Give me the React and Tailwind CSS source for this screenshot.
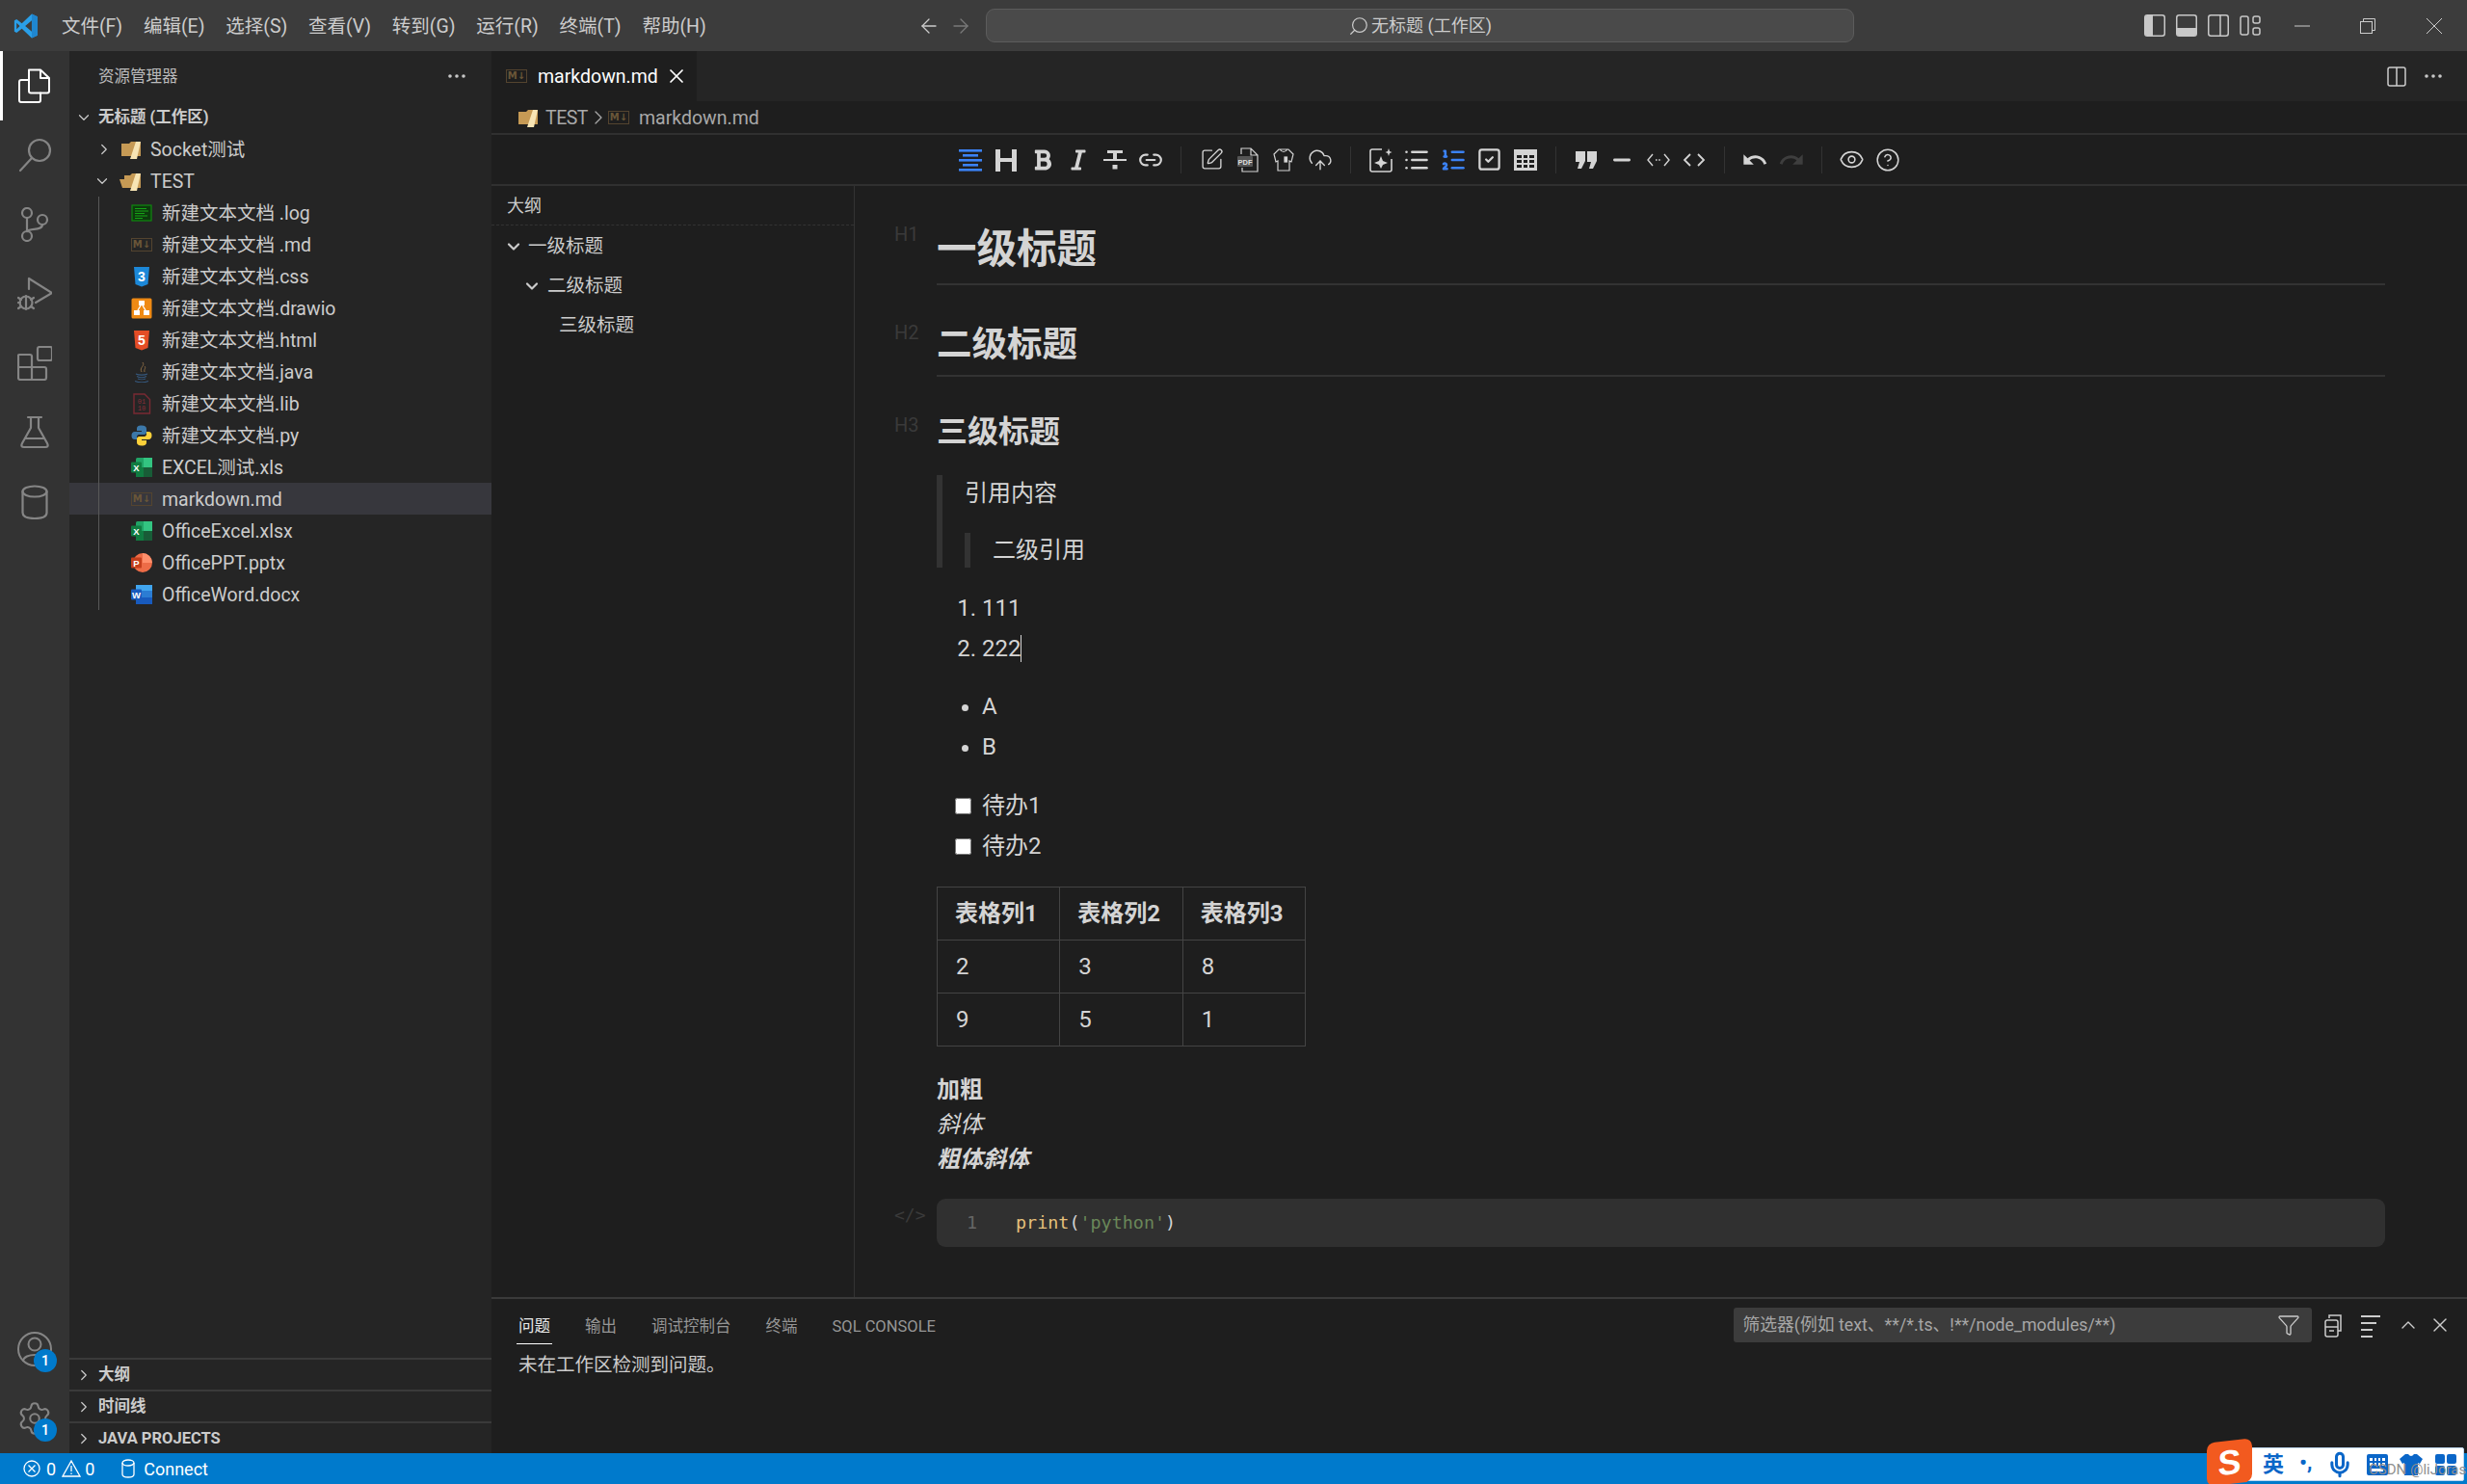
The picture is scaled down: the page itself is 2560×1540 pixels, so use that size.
import React from "react";
import {
  ArrowLeft, ArrowRight, ChevronDown, ChevronRight, ChevronUp, CircleHelp, CloudUpload, Ellipsis, Eye, Funnel,
  Link2, List, ListOrdered, Mic, Minus, Search, Settings, SquareCheck, SquarePen, X,
} from "lucide-react";
import { FaBold, FaItalic } from "react-icons/fa";
import { MdUndo, MdRedo } from "react-icons/md";

const S = ({ size = 36, vb = 36, className = "", children, stroke = "currentColor", sw = 2 }) => (
  <svg width={size} height={size} viewBox={`0 0 ${vb} ${vb}`} fill="none" stroke={stroke} strokeWidth={sw} className={className} strokeLinejoin="round" strokeLinecap="round">
    {children}
  </svg>
);

const Logo = () => (
  <svg width="26" height="26" viewBox="0 0 24 24" className="shrink-0">
    <path d="M17.5 0.5 L23 3 V21 L17.5 23.5 L8 14.5 L3 18.5 L0.8 17.3 V6.7 L3 5.5 L8 9.5 Z M17.5 6.8 L11.2 12 L17.5 17.2 Z M3 9 V15 L6 12 Z" fill="#2a9fe8" fillRule="evenodd" />
    <path d="M17.5 0.5 L23 3 V21 L17.5 23.5 V17.2 V6.8 Z" fill="#1f86cf" />
  </svg>
);

const Md = () => (
  <span className="w-[22px] h-[14px] shrink-0 border border-[#54442f] flex items-center justify-center text-[10px] leading-none font-bold text-[#6a5638] font-['DejaVu_Sans',sans-serif]">M↓</span>
);

const Folder = ({ open }) => (
  <svg width="24" height="22" viewBox="0 0 24 22" className="shrink-0">
    <path d={open ? "M6 5 L12 5 L14 3 H23 V18 H4 L1 9 H6 Z" : "M3 5 H11 L13 3 H23 V18 H3 Z"} fill="#c69a55" />
    <path d="M18 3 H23 L19 21 H12 Z" fill="#f7e4b4" />
  </svg>
);

const FileIcon = ({ t }) => {
  if (t === "md") return <Md />;
  const common = { width: 22, height: 22, viewBox: "0 0 22 22", className: "shrink-0" };
  if (t === "log") return <svg {...common}><rect x="1" y="3" width="20" height="16" fill="#0c3a0c" stroke="#0f8a0f" strokeWidth="1.2" /><path d="M4 6.5h12M4 9h14M4 11.5h10M4 14h13M4 16.5h8" stroke="#16a316" strokeWidth="1" /></svg>;
  if (t === "css") return <svg {...common}><path d="M3 1 H19 L17.5 19 L11 21.5 L4.5 19 Z" fill="#1c88d8" /><text x="11" y="16" textAnchor="middle" fontSize="14" fontWeight="700" fill="#fff" fontFamily="Liberation Sans">3</text></svg>;
  if (t === "html") return <svg {...common}><path d="M3 1 H19 L17.5 19 L11 21.5 L4.5 19 Z" fill="#e44d26" /><text x="11" y="16" textAnchor="middle" fontSize="14" fontWeight="700" fill="#fff" fontFamily="Liberation Sans">5</text></svg>;
  if (t === "drawio") return <svg {...common}><rect x="0.5" y="0.5" width="21" height="21" rx="1.5" fill="#ef8a14" /><rect x="8" y="3" width="6" height="5" fill="#fff" /><rect x="3" y="13" width="6" height="5" fill="#fff" /><rect x="13" y="13" width="6" height="5" fill="#fff" /><path d="M10 8 L7 13 M12 8 L15 13" stroke="#fff" strokeWidth="1.4" /></svg>;
  if (t === "java") return <svg {...common} fill="none"><path d="M12 1 C15 5 8 6 11 11 M14 5 C16 7 13 8 14 11" stroke="#8a6b45" strokeWidth="1" /><path d="M5 13 C8 14.5 14 14.5 17 13 M6 15.5 C9 17 13 17 16 15.5 M7 18 C9 19 13 19 15 18 M4 20.5 C8 22 14 22 18 20.5" stroke="#35587e" strokeWidth="1.2" /></svg>;
  if (t === "lib") return <svg {...common}><path d="M3 1 H14 L19.5 6.5 V21 H3 Z" fill="none" stroke="#7a2a33" strokeWidth="1.4" /><text x="11" y="11" textAnchor="middle" fontSize="7" fill="#8b2f3a" fontFamily="Liberation Mono">01</text><text x="11" y="18" textAnchor="middle" fontSize="7" fill="#8b2f3a" fontFamily="Liberation Mono">10</text></svg>;
  if (t === "py") return <svg {...common}><path d="M11 0.5 C7 0.5 6 2 6 4 V6 H11 V7 H4 C1.5 7 0.5 9 0.5 11 C0.5 13.5 1.5 15 4 15 H6 V12.5 C6 10.5 7.5 10 9 10 H13.5 C15 10 16 9 16 7.5 V4 C16 2 14.5 0.5 11 0.5 Z" fill="#3c78a9" /><path d="M11 21.5 C15 21.5 16 20 16 18 V16 H11 V15 H18 C20.5 15 21.5 13 21.5 11 C21.5 8.5 20.5 7 18 7 H16 V9.5 C16 11.5 14.5 12 13 12 H8.5 C7 12 6 13 6 14.5 V18 C6 20 7.5 21.5 11 21.5 Z" fill="#fdd13a" /></svg>;
  if (t === "xls") return <svg {...common}><rect x="5" y="1" width="17" height="20" rx="1.5" fill="#21a366" /><rect x="13" y="1" width="9" height="10" fill="#33c481" /><rect x="5" y="11" width="8" height="10" fill="#107c41" /><rect x="13" y="11" width="9" height="10" fill="#185c37" /><rect x="0" y="5.5" width="11" height="11" rx="1" fill="#107c41" /><text x="5.5" y="14.5" textAnchor="middle" fontSize="9.5" fontWeight="700" fill="#fff" fontFamily="Liberation Sans">X</text></svg>;
  if (t === "ppt") return <svg {...common}><circle cx="12" cy="11" r="10" fill="#ed6c47" /><path d="M12 1 A10 10 0 0 1 22 11 H12 Z" fill="#ff8f6b" /><rect x="0" y="5.5" width="11" height="11" rx="1" fill="#c43e1c" /><text x="5.5" y="14.5" textAnchor="middle" fontSize="9.5" fontWeight="700" fill="#fff" fontFamily="Liberation Sans">P</text></svg>;
  if (t === "doc") return <svg {...common}><rect x="5" y="1" width="17" height="20" rx="1.5" fill="#2b7cd3" /><rect x="5" y="1" width="17" height="6" fill="#41a5ee" /><rect x="5" y="14" width="17" height="7" fill="#185abd" /><rect x="0" y="5.5" width="11" height="11" rx="1" fill="#185abd" /><text x="5.5" y="14.5" textAnchor="middle" fontSize="9.5" fontWeight="700" fill="#fff" fontFamily="Liberation Sans">W</text></svg>;
  return null;
};

const menus = ["文件(F)", "编辑(E)", "选择(S)", "查看(V)", "转到(G)", "运行(R)", "终端(T)", "帮助(H)"];
const files = [
  ["log", "新建文本文档 .log"], ["md", "新建文本文档 .md"], ["css", "新建文本文档.css"], ["drawio", "新建文本文档.drawio"],
  ["html", "新建文本文档.html"], ["java", "新建文本文档.java"], ["lib", "新建文本文档.lib"], ["py", "新建文本文档.py"],
  ["xls", "EXCEL测试.xls"], ["md", "markdown.md"], ["xls", "OfficeExcel.xlsx"], ["ppt", "OfficePPT.pptx"], ["doc", "OfficeWord.docx"],
];

const TitleBar = () => (
  <div className="h-[53px] shrink-0 bg-[#3c3c3c] flex items-center text-[#cccccc] text-[19.5px]">
    <div className="w-[950px] shrink-0 flex items-center">
      <div className="w-[53px] pl-[14px] flex shrink-0"><Logo /></div>
      {menus.map((m) => (
        <span key={m} className="px-[10.9px] leading-[53px] whitespace-nowrap translate-y-px">{m}</span>
      ))}
    </div>
    <div className="w-[73px] shrink-0 flex items-center pl-[2px] gap-[9px]">
      <ArrowLeft size={24} strokeWidth={1.3} className="text-[#cccccc]" />
      <ArrowRight size={24} strokeWidth={1.3} className="text-[#7a7a7a]" />
    </div>
    <div className="w-[901px] h-[35px] shrink-0 bg-[#4a4a4a] border border-[#5c5c5c] rounded-[9px] flex items-center justify-center gap-[2px] text-[18px] text-[#cccccc]">
      <Search size={22} strokeWidth={1.3} className="-scale-x-100" />
      <span>无标题 (工作区)</span>
    </div>
    <div className="ml-auto flex items-center text-[#c8c8c8]">
      <div className="w-[33px] flex justify-center"><svg width="22" height="23" viewBox="0 0 22 23"><rect x="0.75" y="0.75" width="20.5" height="21.5" rx="2.5" fill="none" stroke="currentColor" strokeWidth="1.5" /><path d="M1 3 Q1 1 3 1 H9 V22 H3 Q1 22 1 20 Z" fill="currentColor" /></svg></div>
      <div className="w-[33px] flex justify-center"><svg width="22" height="23" viewBox="0 0 22 23"><rect x="0.75" y="0.75" width="20.5" height="21.5" rx="2.5" fill="none" stroke="currentColor" strokeWidth="1.5" /><path d="M1 14 H21 V20 Q21 22 19 22 H3 Q1 22 1 20 Z" fill="currentColor" /></svg></div>
      <div className="w-[33px] flex justify-center"><svg width="22" height="23" viewBox="0 0 22 23" fill="none" stroke="currentColor" strokeWidth="1.5"><rect x="0.75" y="0.75" width="20.5" height="21.5" rx="2.5" /><path d="M13 1 V22" /></svg></div>
      <div className="w-[33px] flex justify-center"><svg width="22" height="23" viewBox="0 0 22 23" fill="none" stroke="currentColor" strokeWidth="1.5"><rect x="1" y="2" width="8" height="19" rx="2" /><rect x="14" y="2" width="7" height="7" rx="2" /><rect x="14" y="14" width="7" height="7" rx="2" /></svg></div>
    </div>
    <div className="ml-[3.5px] flex items-center text-[#cccccc]">
      <div className="w-[68px] flex justify-center"><svg width="16" height="2" viewBox="0 0 16 2"><path d="M0 1 H16" stroke="currentColor" strokeWidth="1" /></svg></div>
      <div className="w-[68px] flex justify-center"><svg width="16" height="16" viewBox="0 0 16 16" fill="none" stroke="currentColor" strokeWidth="1"><rect x="0.5" y="3.5" width="12" height="12" /><path d="M3.5 3 V0.5 H15.5 V12.5 H13" /></svg></div>
      <div className="w-[69px] flex justify-center"><svg width="16" height="16" viewBox="0 0 16 16" stroke="currentColor" strokeWidth="1"><path d="M0 0 L16 16 M16 0 L0 16" /></svg></div>
    </div>
  </div>
);

const Badge = () => (
  <span className="absolute left-[35px] top-[36px] w-[24px] h-[24px] rounded-full bg-[#007acc] text-white text-[14px] font-semibold flex items-center justify-center">1</span>
);

const Activity = () => (
  <div className="w-[72px] shrink-0 bg-[#333333] flex flex-col text-[#858585]">
    <div className="h-[72px] flex items-center justify-center border-l-[3px] border-white text-white pr-[3px]">
      <S sw={2}><path d="M12 1.5 H24 L33 10 V23.5 Q33 25.5 31 25.5 H14 Q12 25.5 12 23.5 Z M24 1.5 V10 H33" /><path d="M12 12 H4 Q2 12 2 14 V33 Q2 35 4 35 H22 Q24 35 24 33 V25.5" /></S>
    </div>
    <div className="h-[72px] flex items-center justify-center">
      <S sw={2.2}><circle cx="23" cy="13" r="11" /><path d="M15 21 L3 34" /></S>
    </div>
    <div className="h-[72px] flex items-center justify-center">
      <S sw={2.2}><circle cx="10" cy="6" r="5" /><circle cx="10" cy="30" r="5" /><circle cx="26" cy="13" r="5" /><path d="M10 11 V25 M26 18 C26 25 13 21 10 25" /></S>
    </div>
    <div className="h-[72px] flex items-center justify-center">
      <S sw={2.2}><path d="M12 2 L36 17 L19 27 M12 2 V13" /><circle cx="9" cy="27" r="6.5" /><path d="M1 22 L4 24 M1 27 H3 M1 33 L4 31 M17 22 L14 24 M17 33 L14 31 M9 20 V34" /></S>
    </div>
    <div className="h-[72px] flex items-center justify-center">
      <S sw={2.2}><rect x="21" y="1" width="15" height="14" rx="2" /><path d="M2 9 H13 Q15 9 15 11 V22 H28 Q30 22 30 24 V33 Q30 35 28 35 H3 Q1 35 1 33 V10 Q1 9 2 9 Z M1 22 H15 V35" /></S>
    </div>
    <div className="h-[72px] flex items-center justify-center">
      <S sw={2.2}><path d="M11 2 H25 M14 2 V13 L5 29 Q3 33 7 33 H29 Q33 33 31 29 L22 13 V2 M9 24 H27" /></S>
    </div>
    <div className="h-[72px] flex items-center justify-center">
      <S sw={2.2}><ellipse cx="18" cy="7" rx="12.5" ry="5.5" /><path d="M5.5 7 V29 Q5.5 35 18 35 Q30.5 35 30.5 29 V7" /></S>
    </div>
    <div className="mt-auto relative h-[72px] flex items-center justify-center">
      <S sw={2}><circle cx="18" cy="18" r="17" /><circle cx="18" cy="13" r="6.5" /><path d="M6 30 C7 22 29 22 30 30" /></S>
      <Badge />
    </div>
    <div className="relative h-[72px] flex items-center justify-center">
      <Settings size={38} strokeWidth={1.3} />
      <Badge />
    </div>
  </div>
);

const Row = ({ className = "", children }) => (
  <div className={`h-[33px] flex items-center whitespace-nowrap ${className}`}>{children}</div>
);

const Sidebar = () => (
  <div className="w-[438px] shrink-0 bg-[#252525] flex flex-col text-[#cccccc] text-[19.5px]">
    <div className="h-[52px] shrink-0 flex items-center justify-between pl-[30px] pr-[24px] text-[16.5px] text-[#bbbbbb]">
      <span className="translate-y-px">资源管理器</span>
      <Ellipsis size={24} strokeWidth={1.6} className="text-[#cccccc]" />
    </div>
    <div className="relative">
      <Row className="pl-[6px] font-bold text-[16.5px]">
        <ChevronDown size={18} strokeWidth={1.6} /><span className="ml-[6px] translate-y-px">无标题 (工作区)</span>
      </Row>
      <Row className="pl-[27px]">
        <ChevronRight size={18} strokeWidth={1.6} /><span className="ml-[6px] flex"><Folder /></span><span className="ml-[9px] translate-y-px">Socket测试</span>
      </Row>
      <Row className="pl-[25px]">
        <ChevronDown size={18} strokeWidth={1.6} /><span className="ml-[8px] flex"><Folder open /></span><span className="ml-[9px] translate-y-px">TEST</span>
      </Row>
      {files.map(([t, n]) => (
        <Row key={n} className={`pl-[64px] ${n === "markdown.md" ? "bg-[#37373d]" : ""}`}>
          <FileIcon t={t} /><span className="ml-[10px] translate-y-px">{n}</span>
        </Row>
      ))}
      <div className="absolute left-[30px] top-[99px] w-px h-[429px] bg-[#585858]" />
    </div>
    <div className="mt-auto">
      {["大纲", "时间线", "JAVA PROJECTS"].map((n) => (
        <Row key={n} className="border-t-2 border-[#3a3a3a] pl-[6px] text-[16.5px] font-bold">
          <ChevronRight size={18} strokeWidth={1.6} /><span className="ml-[6px] translate-y-px">{n}</span>
        </Row>
      ))}
    </div>
  </div>
);

const Sep = () => (
  <div className="w-[25.5px] flex justify-center shrink-0"><div className="w-px h-[28px] bg-[#333333]" /></div>
);
const T = ({ children, className = "" }) => (
  <div className={`w-[37.5px] shrink-0 flex justify-center ${className}`}>{children}</div>
);

const Toolbar = () => (
  <div className="h-[55px] shrink-0 border-y-2 border-[#303030] flex items-center pl-[478px] text-[#d4d4d4]">
    <T className="text-[#3b82f6]">
      <svg width="24" height="24" viewBox="0 0 24 24" fill="currentColor"><rect x="0" y="1" width="24" height="2.6" /><rect x="4" y="6" width="16" height="2.6" /><rect x="0" y="11" width="24" height="2.6" /><rect x="4" y="16" width="16" height="2.6" /><rect x="0" y="21" width="24" height="2.6" /></svg>
    </T>
    <T><svg width="22" height="24" viewBox="0 0 22 24" fill="currentColor"><rect x="0" y="1" width="5" height="23" /><rect x="17" y="1" width="5" height="23" /><rect x="5" y="10" width="12" height="4" /></svg></T>
    <T><FaBold size={24} /></T>
    <T><FaItalic size={24} /></T>
    <T><svg width="24" height="24" viewBox="0 0 24 24" fill="currentColor"><rect x="4" y="2" width="16" height="3" /><rect x="10" y="5" width="4" height="6" /><rect x="0" y="11" width="24" height="2" /><rect x="9.5" y="17" width="5" height="4.5" /></svg></T>
    <T><Link2 size={26} strokeWidth={2} /></T>
    <Sep />
    <T><SquarePen size={25} strokeWidth={1.3} /></T>
    <T><svg width="24" height="26" viewBox="0 0 24 26" fill="none" stroke="currentColor" strokeWidth="1.2"><path d="M5 7 V1 H15 L22 8 V25 H6 V21 M15 1 V8 H22" /><rect x="1" y="9" width="16" height="11" rx="1" fill="#555" stroke="none" /><text x="9" y="17.5" textAnchor="middle" fontSize="7.5" fontWeight="700" fill="#ddd" stroke="none" fontFamily="Liberation Sans">PDF</text></svg></T>
    <T><svg width="24" height="26" viewBox="0 0 24 26" fill="none" stroke="currentColor" strokeWidth="1.2"><path d="M7 2 H17 L22 7 L20 15 L18 14 V24 H6 V14 L4 15 L2 7 Z M8 2 Q12 7 16 2" /><rect x="13" y="10" width="2.5" height="5" fill="currentColor" /></svg></T>
    <T><CloudUpload size={26} strokeWidth={1.3} /></T>
    <Sep />
    <T><svg width="24" height="26" viewBox="0 0 24 26" fill="none" stroke="currentColor" strokeWidth="1.6"><path d="M13 2 H3 Q1 2 1 4 V23 Q1 25 3 25 H21 Q23 25 23 23 V12" /><path d="M12 9 L14 14 L19 16 L14 18 L12 22 L10 18 L5 16 L10 14 Z M20 1 L21 4 L23.5 5 L21 6 L20 9 L19 6 L16.5 5 L19 4 Z" fill="currentColor" stroke="none" /></svg></T>
    <T><List size={28} strokeWidth={2.2} /></T>
    <T className="text-[#3b82f6]"><ListOrdered size={28} strokeWidth={2.2} /></T>
    <T><SquareCheck size={27} strokeWidth={2} /></T>
    <T><svg width="24" height="24" viewBox="0 0 24 24" fill="currentColor"><path fillRule="evenodd" d="M0 1 H24 V23 H0 Z M3 7 V10 H8 V7 Z M10 7 V10 H14 V7 Z M16 7 V10 H21 V7 Z M3 12 V15 H8 V12 Z M10 12 V15 H14 V12 Z M16 12 V15 H21 V12 Z M3 17 V20 H8 V17 Z M10 17 V20 H14 V17 Z M16 17 V20 H21 V17 Z" /></svg></T>
    <Sep />
    <T><svg width="24" height="20" viewBox="0 0 24 20" fill="currentColor"><path d="M1 1 H11 V11 L7 19 H3 L5 12 H1 Z M13 1 H23 V11 L19 19 H15 L17 12 H13 Z" /></svg></T>
    <T><Minus size={26} strokeWidth={2.6} /></T>
    <T><svg width="24" height="16" viewBox="0 0 24 16" fill="none" stroke="currentColor" strokeWidth="1.4"><path d="M6 2 L1 8 L6 14 M18 2 L23 8 L18 14" /><path d="M9 8 H15.5" strokeDasharray="1.6 1.6" /></svg></T>
    <T><svg width="24" height="16" viewBox="0 0 24 16" fill="none" stroke="currentColor" strokeWidth="1.8"><path d="M8 2 L2 8 L8 14 M16 2 L22 8 L16 14" /></svg></T>
    <Sep />
    <T><MdUndo size={28} /></T>
    <T className="text-[#3e3e3e]"><MdRedo size={28} /></T>
    <Sep />
    <T><Eye size={27} strokeWidth={1.4} /></T>
    <T><CircleHelp size={26} strokeWidth={1.4} /></T>
  </div>
);

const Outline = () => (
  <div className="w-[377px] shrink-0 border-r border-[#333333] text-[#cccccc] text-[19.5px]">
    <div className="h-[41px] pl-[16px] flex items-center text-[18px] border-b border-dashed border-[#333333]">大纲</div>
    <div className="h-[41px] pt-[3px] flex items-center pl-[13px] whitespace-nowrap"><ChevronDown size={20} strokeWidth={2.6} /><span className="ml-[5px]">一级标题</span></div>
    <div className="h-[41px] pt-[3px] flex items-center pl-[32px] whitespace-nowrap"><ChevronDown size={20} strokeWidth={2.6} /><span className="ml-[6px]">二级标题</span></div>
    <div className="h-[41px] pt-[3px] flex items-center pl-[70px] whitespace-nowrap">三级标题</div>
  </div>
);

const HLabel = ({ children, className = "" }) => (
  <span className={`absolute -left-[44px] text-[20px] leading-[24px] font-normal text-[#3a3a3a] ${className}`}>{children}</span>
);

const Preview = () => (
  <div className="flex-1 min-w-0 px-[85px] text-[#d4d4d4] text-[24px]">
    <h1 className="relative mt-[38px] text-[41.5px] font-bold leading-[52px] pt-[2px] pb-[9px] border-b-2 border-[#333333]">
      <HLabel className="top-0">H1</HLabel>一级标题
    </h1>
    <h2 className="relative mt-[37px] text-[36.5px] font-bold leading-[46px] pt-[2px] pb-[8px] border-b-2 border-[#333333]">
      <HLabel className="top-0">H2</HLabel>二级标题
    </h2>
    <h3 className="relative mt-[36px] text-[32px] font-bold leading-[42px]">
      <HLabel className="top-[1.5px]">H3</HLabel>三级标题
    </h3>
    <div className="mt-[24px] border-l-[6px] border-[#333333] pl-[23px]">
      <p className="leading-[38px]">引用内容</p>
      <div className="mt-[22px] border-l-[6px] border-[#333333] pl-[23px]">
        <p className="leading-[36px]">二级引用</p>
      </div>
    </div>
    <ol className="mt-[22px] list-decimal pl-[47px] leading-[41.5px]">
      <li>111</li>
      <li><span className="border-r border-[#d4d4d4]">222</span></li>
    </ol>
    <ul className="mt-[19px] list-disc pl-[47px] leading-[41.5px]">
      <li>A</li>
      <li>B</li>
    </ul>
    <div className="mt-[20px] leading-[41.5px]">
      <div className="flex items-center pl-[19px]"><input type="checkbox" readOnly className="w-[17px] h-[17px] mr-[11px]" />待办1</div>
      <div className="flex items-center pl-[19px]"><input type="checkbox" readOnly className="w-[17px] h-[17px] mr-[11px]" />待办2</div>
    </div>
    <table className="mt-[21px] w-[383px] table-fixed border-collapse">
      <thead>
        <tr className="h-[55px]">
          {["表格列1", "表格列2", "表格列3"].map((h) => (
            <th key={h} className="border border-[#444444] pl-[18px] text-left font-bold">{h}</th>
          ))}
        </tr>
      </thead>
      <tbody>
        {[[2, 3, 8], [9, 5, 1]].map((r, i) => (
          <tr key={i} className="h-[55px]">
            {r.map((c, j) => (
              <td key={j} className="border border-[#444444] pl-[19px]">{c}</td>
            ))}
          </tr>
        ))}
      </tbody>
    </table>
    <p className="mt-[27px] leading-[36px]">
      <strong className="font-bold">加粗</strong><br />
      <em className="italic">斜体</em><br />
      <strong className="font-bold italic">粗体斜体</strong>
    </p>
    <div className="relative mt-[23px] h-[50px] bg-[#303030] rounded-[9px] flex items-center pl-[31px] font-['DejaVu_Sans_Mono',monospace] text-[18.4px]">
      <span className="absolute -left-[44px] top-[3px] text-[#3a3a3a] text-[18px]">{"</>"}</span>
      <span className="w-[51px] text-[#666666]">1</span>
      <span className="text-[#e5c07b]">print</span><span className="text-[#d4d4d4]">(</span><span className="text-[#6a8759]">'python'</span><span className="text-[#d4d4d4]">)</span>
    </div>
  </div>
);

const Panel = () => (
  <div className="h-[162px] shrink-0 border-t-2 border-[#3a3a3a] text-[#cccccc]">
    <div className="flex pl-[26px] text-[16.5px]">
      <span className="px-[2px] pt-[17px] pb-[5px] leading-[24px] border-b border-white text-[#e7e7e7] whitespace-nowrap">问题</span>
      {["输出", "调试控制台", "终端", "SQL CONSOLE"].map((n) => (
        <span key={n} className="ml-[32px] px-[2px] pt-[17px] leading-[24px] text-[#969696] whitespace-nowrap">{n}</span>
      ))}
      <div className="ml-auto mr-[3px] mt-[9px] w-[600px] h-[36px] bg-[#3c3c3c] rounded-[3px] flex items-center justify-between pl-[10px] pr-[12px] text-[17.8px] text-[#a6a6a6] whitespace-nowrap">
        <span>筛选器(例如 text、**/*.ts、!**/node_modules/**)</span>
        <Funnel size={24} strokeWidth={1.3} className="text-[#cccccc]" />
      </div>
      <div className="flex items-start pt-[15px] pr-[14.5px] text-[#cccccc]">
        <div className="w-[39px] flex justify-center"><svg width="20" height="26" viewBox="0 0 20 26" fill="none" stroke="currentColor" strokeWidth="1.5"><path d="M6 5 V2 H18 V18 H15" /><rect x="2" y="7" width="13" height="17" rx="2" /><path d="M2 14 H15 M6 18 H11" /></svg></div>
        <div className="w-[39px] flex justify-center"><svg width="24" height="26" viewBox="0 0 24 26" fill="none" stroke="currentColor" strokeWidth="1.8"><path d="M2 3 H22 M2 10 H18 M2 17 H14 M2 24 H14" /></svg></div>
        <div className="w-[39px] flex justify-center"><ChevronUp size={24} strokeWidth={1.4} /></div>
        <div className="w-[27px] flex justify-center"><X size={24} strokeWidth={1.4} /></div>
      </div>
    </div>
    <div className="pl-[28px] mt-[7px] text-[19.5px] leading-[30px] text-[#cccccc]">未在工作区检测到问题。</div>
  </div>
);

const Sogou = () => (
  <div className="absolute left-[2290px] top-[1495px] w-[267px] h-[45px]">
    <div className="absolute left-[35px] top-[7px] right-0 bottom-[3px] bg-white border border-[#bcd6ee] rounded-[2px]" />
    <div className="absolute left-0 top-0 w-[47px] h-[45px] bg-[#f25a1f] rounded-[8px] -skew-y-6 flex items-center justify-center text-white font-bold text-[36px] leading-none font-['Liberation_Sans',sans-serif]">S</div>
    <span className="absolute left-[58px] top-[9px] text-[#0a66c8] font-bold text-[22px] leading-[32px]">英</span>
    <span className="absolute left-[96px] top-[7px] text-[#0a66c8] font-bold text-[22px] leading-[32px]">•,</span>
    <Mic size={28} strokeWidth={2.6} className="absolute left-[124px] top-[11px] text-[#0a66c8]" />
    <svg width="24" height="22" viewBox="0 0 24 22" className="absolute left-[165px] top-[14px] text-[#0a66c8]" fill="currentColor"><path fillRule="evenodd" d="M1 2 Q1 0 3 0 H21 Q23 0 23 2 V20 Q23 22 21 22 H3 Q1 22 1 20 Z M4 4 V7 H7 V4 Z M9 4 V7 H11 V4 Z M13 4 V7 H15 V4 Z M17 4 V7 H20 V4 Z M4 9 V12 H7 V9 Z M9 9 V12 H11 V9 Z M13 9 V12 H15 V9 Z M17 9 V12 H20 V9 Z M6 15 V18 H18 V15 Z" /></svg>
    <svg width="24" height="22" viewBox="0 0 24 22" className="absolute left-[200px] top-[14px] text-[#0a66c8]" fill="currentColor"><path d="M6 0 H9 Q12 4 15 0 H18 L24 5 L21 10 L19 9 V22 H5 V9 L3 10 L0 5 Z" /></svg>
    <svg width="24" height="24" viewBox="0 0 24 24" className="absolute left-[236px] top-[13px] text-[#0a66c8]" fill="currentColor"><rect x="1" y="1" width="10" height="10" rx="2" /><rect x="13" y="1" width="10" height="10" rx="2" /><rect x="1" y="13" width="10" height="10" rx="2" /><rect x="13" y="13" width="10" height="10" rx="2" /></svg>
    <span className="absolute left-[168px] top-[19px] text-[15px] leading-[22px] text-[#8f8f8f] whitespace-nowrap">CSDN @liJoras</span>
  </div>
);

const StatusBar = () => (
  <div className="h-[32px] shrink-0 bg-[#007acc] text-white flex items-center text-[18px] pl-[24px] whitespace-nowrap">
    <svg width="18" height="18" viewBox="0 0 18 18" fill="none" stroke="currentColor" strokeWidth="1.3"><circle cx="9" cy="9" r="8" /><path d="M5.5 5.5 L12.5 12.5 M12.5 5.5 L5.5 12.5" /></svg>
    <span className="ml-[6px]">0</span>
    <svg width="20" height="18" viewBox="0 0 20 18" fill="none" stroke="currentColor" strokeWidth="1.3" className="ml-[6px]"><path d="M10 1 L19 17 H1 Z M10 6 V12 M10 13.5 V15" /></svg>
    <span className="ml-[4px]">0</span>
    <svg width="14" height="20" viewBox="0 0 14 20" fill="none" stroke="currentColor" strokeWidth="1.3" className="ml-[28px]"><ellipse cx="7" cy="4" rx="6" ry="3" /><path d="M1 4 V16 Q1 19 7 19 Q13 19 13 16 V4" /></svg>
    <span className="ml-[9px]">Connect</span>
  </div>
);

export default function App() {
  return (
    <div className="relative w-[2560px] h-[1540px] overflow-hidden flex flex-col bg-[#1e1e1e] font-['Roboto','Noto_Sans_CJK_SC',sans-serif]">
      <TitleBar />
      <div className="flex-1 min-h-0 flex">
        <Activity />
        <Sidebar />
        <div className="flex-1 min-w-0 flex flex-col">
          <div className="h-[52px] shrink-0 bg-[#252525] flex items-center text-[19.5px]">
            <div className="w-[213px] h-full bg-[#1e1e1e] flex items-center pl-[15px] text-white">
              <Md /><span className="ml-[11px] translate-y-px">markdown.md</span>
              <X size={24} strokeWidth={1.7} className="ml-[7px]" />
            </div>
            <div className="ml-auto flex items-center text-[#cccccc]">
              <div className="w-[39px] flex justify-center"><svg width="20" height="21" viewBox="0 0 20 21" fill="none" stroke="currentColor" strokeWidth="1.5"><rect x="1" y="1" width="18" height="19" rx="2" /><path d="M10 1 V20" /></svg></div>
              <div className="w-[39px] pr-[1px] flex justify-center"><Ellipsis size={24} strokeWidth={1.6} /></div>
              <div className="w-[15px]" />
            </div>
          </div>
          <div className="h-[33px] shrink-0 flex items-center pl-[25px] text-[19.5px] text-[#a9a9a9]">
            <Folder /><span className="ml-[7px] translate-y-px tracking-[-0.5px]">TEST</span>
            <ChevronRight size={24} strokeWidth={1.3} className="-ml-[1px]" />
            <span className="-ml-[2px] flex"><Md /></span><span className="ml-[10px] translate-y-px">markdown.md</span>
          </div>
          <Toolbar />
          <div className="flex-1 min-h-0 flex overflow-hidden">
            <Outline />
            <Preview />
          </div>
          <Panel />
        </div>
      </div>
      <StatusBar />
      <Sogou />
    </div>
  );
}
